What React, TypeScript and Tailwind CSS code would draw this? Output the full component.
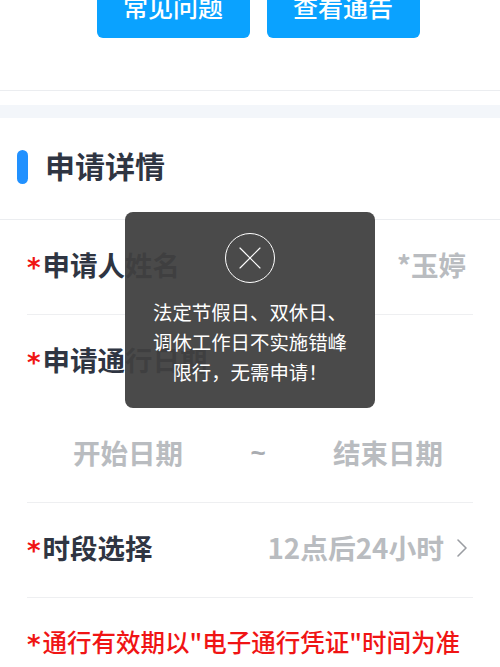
import { ChevronRight, X } from "lucide-react";

const font = "font-['Noto_Sans_CJK_SC','Inter',sans-serif]";

function Star() {
  return (
    <span className="h-[22px] w-[15.5px] overflow-visible font-['DejaVu_Sans',sans-serif] text-[26px] font-bold leading-[28px] text-[#f01414]">
      *
    </span>
  );
}

function Label({ text }: { text: string }) {
  return (
    <div className="flex items-center text-[27.5px] font-bold leading-none text-[#2f3542]">
      <Star />
      {text}
    </div>
  );
}

export default function App() {
  return (
    <div className={`relative h-[667px] w-[500px] overflow-hidden bg-white ${font}`}>
      <div className="-mt-[22px] flex h-[113px] justify-center gap-[17px] border-b border-[#ebedf0] pl-[16px]">
        <button className="h-[60px] w-[153px] rounded-[6px] bg-[#0aa2ff] pb-[2px] text-[25px] font-medium text-white">
          常见问题
        </button>
        <button className="h-[60px] w-[153px] rounded-[6px] bg-[#0aa2ff] pb-[2px] text-[25px] font-medium text-white">
          查看通告
        </button>
      </div>

      <div className="mt-[14px] h-[13px] bg-[#f3f6fa]" />

      <div className="flex h-[102px] items-center gap-[17px] border-b border-[#ebedf0] pb-[7px] pl-[17px]">
        <div className="mt-[4px] h-[34px] w-[11px] rounded-full bg-[#2191ff]" />
        <h2 className="text-[30px] font-bold leading-none text-[#2f3542]">申请详情</h2>
      </div>

      <div className="px-[27px]">
        <div className="flex h-[95px] items-center justify-between border-b border-[#eeeff1] pb-[5px]">
          <Label text="申请人姓名" />
          <span className="pr-[7px] text-[27.5px] font-bold leading-none text-[#b9bcc0]">*玉婷</span>
        </div>
        <div className="flex h-[94px] items-center pb-[5px]">
          <Label text="申请通行日期" />
        </div>
        <div className="flex h-[94px] items-center justify-between border-b border-[#eeeff1] pb-[6px] pl-[46px] pr-[30px] text-[27.5px] font-bold leading-none text-[#b9bcc0]">
          <span>开始日期</span>
          <span className="font-['Liberation_Sans',sans-serif] text-[26px] font-bold text-[#a9acb1]">~</span>
          <span>结束日期</span>
        </div>
        <div className="flex h-[95px] items-center justify-between border-b border-[#eeeff1] pb-[5px]">
          <Label text="时段选择" />
          <div className="-mr-[5px] flex items-center gap-[2px] text-[27.75px] font-bold leading-none text-[#b9bcc0]">
            <span>12点后24小时</span>
            <ChevronRight className="h-[32px] w-[32px] text-[#9a9da2]" strokeWidth={1.2} />
          </div>
        </div>
        <div className="flex h-[90px] items-center whitespace-nowrap pb-[2px] text-[24.5px] font-medium leading-none text-[#f01414]">
          <Star />
          通行有效期以"电子通行凭证"时间为准
        </div>
      </div>

      <div className="absolute left-[125px] top-[212px] flex h-[196px] w-[250px] flex-col items-center rounded-[8px] bg-[#404040]/95 pt-[21px] text-white">
        <div className="flex h-[50px] w-[50px] items-center justify-center rounded-full border border-white">
          <X className="h-[40px] w-[40px]" strokeWidth={0.7} />
        </div>
        <p className="mt-[14px] w-[200px] text-center text-[19.4px] leading-[30px]">
          法定节假日、双休日、调休工作日不实施错峰限行，无需申请！
        </p>
      </div>
    </div>
  );
}
